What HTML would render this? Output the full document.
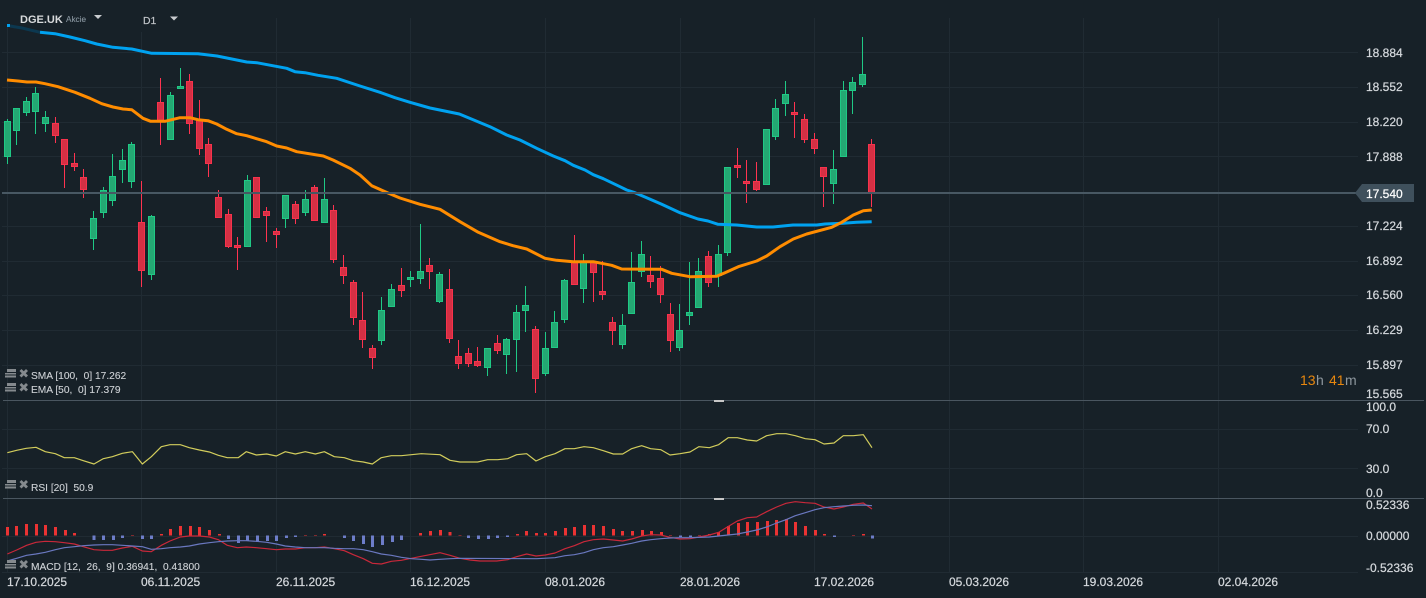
<!DOCTYPE html>
<html><head><meta charset="utf-8"><title>DGE.UK</title>
<style>
html,body{margin:0;padding:0;background:#172128;width:1426px;height:598px;overflow:hidden}
svg{display:block;font-family:"Liberation Sans",sans-serif}
.p{font-size:12px;fill:#d4d8dc;stroke:#d4d8dc;stroke-width:.22}
.l{font-size:10.2px;fill:#cdd1d5;stroke:#cdd1d5;stroke-width:.12;white-space:pre}
</style></head><body>
<svg width="1426" height="598" viewBox="0 0 1426 598" xmlns="http://www.w3.org/2000/svg" xml:space="preserve">
<rect width="1426" height="598" fill="#172128"/>

<!-- grid -->
<path fill="none" stroke="#202b33" stroke-width="1" d="M2 52.5H1358M2 87.5H1358M2 122.5H1358M2 156.5H1358M2 226.5H1358M2 261.5H1358M2 295.5H1358M2 330.5H1358M2 365.5H1358M2 429.5H1358M2 468.5H1358M2 536.5H1358M2 572.5H1358"/>
<path fill="none" stroke="#202b33" stroke-width="1" d="M7.5 25V572M141.5 32V572M276.5 18V572M410.5 18V572M545.5 18V572M680.5 18V572M814.5 18V572M949.5 18V572M1083.5 18V572M1218.5 18V572"/>

<!-- wicks -->
<path fill="none" stroke="#1fc985" stroke-width="1" d="M7.5 119V164M16.5 108V145M26.5 97V116M35.5 87V134M45.5 111V132M93.5 211V250M103.5 187V218M112.5 154V206M122.5 149V183M131.5 142V188M151.5 215V280M170.5 92V140M180.5 68V89M247.5 175V247M285.5 195V228M305.5 190V216M324.5 178V223M381.5 297V345M391.5 284V307M410.5 271V287M420.5 224V284M439.5 272V303M487.5 348V376M506.5 338V374M516.5 305V372M525.5 286V332M545.5 332V376M554.5 311V348M564.5 279V323M583.5 254V303M622.5 314V349M631.5 252V314M641.5 241V277M679.5 304V351M689.5 262V325M698.5 258V308M718.5 245V287M727.5 167V256M766.5 129V185M775.5 99V140M785.5 81V116M833.5 150V204M843.5 81V157M852.5 77V114M862.5 37V87"/>
<path fill="none" stroke="#ff3350" stroke-width="1" d="M55.5 117V143M64.5 139V188M74.5 153V171M83.5 169V198M141.5 181V287M160.5 78V145M189.5 74V134M199.5 100V155M208.5 138V177M218.5 190V218M228.5 209V248M237.5 237V270M256.5 177V218M266.5 207V242M276.5 228V248M295.5 201V224M314.5 185V221M333.5 205V263M343.5 255V284M353.5 280V325M362.5 292V348M372.5 345V369M401.5 268V297M429.5 258V289M449.5 269V343M458.5 340V369M468.5 348V367M477.5 347V367M497.5 335V354M535.5 326V393M574.5 235V285M593.5 261V302M602.5 261V300M612.5 317V345M650.5 256V288M660.5 266V303M670.5 303V352M708.5 251V287M737.5 148V178M746.5 160V203M756.5 162V191M794.5 102V138M804.5 114V143M814.5 133V154M823.5 167V207M871.5 139V207"/>

<!-- bodies -->
<path fill="#24a873" stroke="#1fc985" stroke-width="1" d="M4.5 121.5h6v35h-6zM13.5 108.5h6v22h-6zM23.5 101.5h6v11h-6zM32.5 93.5h6v18h-6zM42.5 117.5h6v6h-6zM90.5 218.5h6v20h-6zM100.5 190.5h6v22h-6zM109.5 176.5h6v24h-6zM119.5 160.5h6v9h-6zM128.5 144.5h6v37h-6zM148.5 216.5h6v58h-6zM167.5 95.5h6v44h-6zM177.5 86.5h6v2h-6zM244.5 180.5h6v66h-6zM282.5 195.5h6v23h-6zM302.5 199.5h6v13h-6zM321.5 199.5h6v23h-6zM378.5 310.5h6v30h-6zM388.5 289.5h6v17h-6zM407.5 277.5h6v2h-6zM417.5 271.5h6v7h-6zM436.5 274.5h6v27h-6zM484.5 348.5h6v19h-6zM503.5 339.5h6v15h-6zM513.5 312.5h6v27h-6zM522.5 305.5h6v5h-6zM542.5 348.5h6v25h-6zM551.5 322.5h6v25h-6zM561.5 280.5h6v39h-6zM580.5 261.5h6v27h-6zM619.5 325.5h6v19h-6zM628.5 282.5h6v31h-6zM638.5 254.5h6v17h-6zM676.5 330.5h6v17h-6zM686.5 312.5h6v3h-6zM695.5 271.5h6v36h-6zM715.5 254.5h6v21h-6zM724.5 167.5h6v85h-6zM763.5 129.5h6v55h-6zM772.5 108.5h6v28h-6zM782.5 94.5h6v9h-6zM830.5 169.5h6v14h-6zM840.5 90.5h6v66h-6zM849.5 82.5h6v8h-6zM859.5 74.5h6v10h-6z"/>
<path fill="#d53044" stroke="#f8324c" stroke-width="1" d="M52.5 123.5h6v12h-6zM61.5 139.5h6v25h-6zM71.5 163.5h6v3h-6zM80.5 177.5h6v12h-6zM138.5 222.5h6v48h-6zM157.5 102.5h6v19h-6zM186.5 81.5h6v42h-6zM196.5 120.5h6v28h-6zM205.5 144.5h6v19h-6zM215.5 197.5h6v20h-6zM225.5 214.5h6v32h-6zM234.5 245.5h6v2h-6zM253.5 177.5h6v40h-6zM263.5 211.5h6v4h-6zM273.5 231.5h6v3h-6zM292.5 204.5h6v14h-6zM311.5 187.5h6v33h-6zM330.5 210.5h6v49h-6zM340.5 267.5h6v8h-6zM350.5 282.5h6v35h-6zM359.5 320.5h6v19h-6zM369.5 348.5h6v9h-6zM398.5 285.5h6v5h-6zM426.5 265.5h6v6h-6zM446.5 289.5h6v49h-6zM455.5 356.5h6v7h-6zM465.5 353.5h6v10h-6zM474.5 361.5h6v4h-6zM494.5 343.5h6v7h-6zM532.5 329.5h6v49h-6zM571.5 261.5h6v23h-6zM590.5 261.5h6v11h-6zM599.5 291.5h6v3h-6zM609.5 322.5h6v8h-6zM647.5 275.5h6v6h-6zM657.5 278.5h6v16h-6zM667.5 314.5h6v26h-6zM705.5 256.5h6v26h-6zM734.5 165.5h6v2h-6zM743.5 181.5h6v2h-6zM753.5 181.5h6v8h-6zM791.5 112.5h6v2h-6zM801.5 119.5h6v20h-6zM811.5 139.5h6v9h-6zM820.5 167.5h6v9h-6zM868.5 144.5h6v48h-6z"/>

<!-- blue MA -->
<rect x="7" y="24" width="3" height="3" fill="#00a2f0"/>
<polyline fill="none" stroke="#0c3850" stroke-width="3" points="10,26 22,28 40,32.3"/>
<polyline fill="none" stroke="#00a2f0" stroke-width="3" stroke-linejoin="round" points="40,32.3 55,33.7 70,37 85,40.7 96.7,44 113,47.3 131.7,49 151.7,53.3 198,53.7 217,56 246.7,62 256.7,62.7 286.7,68.3 295,71.7 305,72.7 318,75.3 336.7,78.3 360,86 380,92.3 395,97.7 410,102.3 430,108 459.3,114 490,126.7 506.7,135 520,140 536.7,148.3 553.3,156 565,160.7 573.3,165.3 585,170 593.3,174.7 603.3,178.7 620,186.7 626.7,190 635,192.7 646.7,197.7 661.7,204.3 680,212.7 698,219 708,221 718,224.3 736.7,225 756.7,227 773,227 793,225 816.7,225 825,224 843,223.3 856.7,222.3 871.7,221.7"/>
<!-- orange MA -->
<polyline fill="none" stroke="#ff8c00" stroke-width="3" stroke-linejoin="round" points="7,80 18,81 27,82 36,82 45,83.7 58,86.7 75,92.3 90,98.3 101.7,103.7 113,107 123,109 131.7,109.7 143,118.3 150.7,121.3 165,121.3 180,117.7 190,117.7 198,119.7 208,120.7 216.7,124 226.7,129.3 236.7,133.7 246.7,135.7 266.7,141.7 276.7,146 286.7,148 296.7,151.7 323.3,156 333,160 350,168.3 360,175 371.7,185.7 388,193 400,198 420,204.3 440,209.3 460,221.7 478.3,232.3 500,241.7 513,245.7 526.7,249 545,258.3 556.7,260.3 573.3,261.7 593.3,261.7 611.7,265.3 621.7,269 661.7,269.3 671.7,273.3 690,276.7 716.7,276.3 725,272.7 738.3,266.7 756.7,261 766.7,256 780,246.7 793.3,239 806.7,234 831.7,227.3 841.7,222.3 853.3,215 863.3,210.7 871.7,210"/>

<!-- current price line -->
<rect x="2" y="192" width="1354" height="2" fill="#485863"/>
<polygon points="1355,193 1362,184 1414,184 1414,202 1362,202" fill="#3f505c"/>

<!-- separators -->
<rect x="3" y="400" width="1421" height="1" fill="#4a5660"/>
<rect x="3" y="498" width="1421" height="1" fill="#4a5660"/>
<rect x="714" y="400" width="10" height="2" fill="#c8c8c8"/>
<rect x="714" y="498" width="10" height="2" fill="#c8c8c8"/>

<!-- RSI -->
<g transform="translate(0,395) scale(.33333)" fill="none" stroke="#d2cd5c" stroke-width="3.6" stroke-linejoin="round">
<polyline points="22,173 50,166 79,160 108,157 136,170 166,176 193,188 223,188 250,197 282,207 310,191 337,185 367,175 397,170 427,207 454,185 484,155 510,149 541,149 568,158 598,165 628,171 655,181 682,188 715,188 739,170 769,180 800,177 829,183 856,170 886,177 916,170 946,177 973,170 1003,185 1033,188 1060,197 1090,201 1117,207 1144,188 1174,182 1204,182 1264,176 1320,179 1350,196 1380,201 1433,201 1463,194 1493,194 1523,191 1550,179 1580,176 1608,198 1636,185 1665,176 1695,161 1723,161 1752,155 1780,158 1810,167 1840,177 1868,177 1895,161 1925,152 1952,161 1982,164 2010,180 2040,176 2070,171 2097,155 2128,158 2156,149 2185,128 2212,128 2242,135 2270,138 2300,122 2330,116 2358,116 2386,122 2416,131 2445,134 2472,147 2502,144 2530,122 2560,122 2590,119 2616,158"/>
</g>

<!-- MACD histogram -->
<g transform="translate(0,395) scale(.33333)" fill="none" stroke-width="9" shape-rendering="crispEdges">
<path stroke="#ea3333" d="M22.5 422V396M49.5 422V393M79.5 422V387M109.5 422V387M136.5 422V390M166.5 422V396M196.5 422V405M223.5 422V414M397.5 422V420M484.5 422V417M511.5 422V402M541.5 422V393M571.5 422V393M598.5 422V396M628.5 422V405M658.5 422V417M916.5 422V420M946.5 422V420M973.5 422V417M1261.5 422V414M1291.5 422V408M1321.5 422V405M1350 422V411M1380 422V420M1553 422V417M1580 422V408M1610 422V414M1636 422V414M1666 422V408M1696 422V399M1723 422V396M1753 422V390M1780 422V390M1810 422V393M1840 422V402M1867 422V408M1897 422V408M1927 422V405M1954 422V408M1984 422V411M2011 422V420M2098 422V420M2128 422V417M2155 422V411M2185 422V393M2215 422V384M2242 422V381M2272 422V381M2302 422V378M2329 422V375M2359 422V372M2386 422V381M2416 422V393M2446 422V405M2473 422V417M2560 422V420M2590 422V417"/>
<path stroke="#6d7dc9" d="M282 422V435M310.5 422V435M340.5 422V435M367.5 422V429M427.5 422V432M454.5 422V432M685.5 422V432M715.5 422V444M742.5 422V438M772.5 422V441M802.5 422V438M829.5 422V438M859.5 422V429M886.5 422V426M1033.5 422V429M1060.5 422V438M1090.5 422V447M1117.5 422V456M1147.5 422V450M1177.5 422V441M1204.5 422V435M1406 422V429M1436 422V432M1466 422V432M1493 422V429M1523 422V426M2041 422V426M2071 422V426M2503 422V426M2617 422V431"/>
</g>
<!-- MACD lines -->
<g transform="translate(0,395) scale(.33333)" fill="none" stroke-width="3.6" stroke-linejoin="round">
<polyline stroke="#c9283a" points="22,477 50,465 80,451 108,442 136,439 166,440 193,443 223,447 250,455 282,464 310,466 337,466 367,459 397,454 427,468 454,470 484,451 510,438 541,426 568,423 598,423 628,426 655,434 682,451 712,458 739,456 769,458 800,461 829,464 856,462 886,462 916,458 946,458 973,456 1003,461 1033,467 1060,479 1090,491 1117,505 1144,507 1174,499 1204,496 1234,490 1264,484 1320,473 1350,481 1380,490 1410,495 1440,498 1490,498 1523,494 1550,485 1580,477 1608,483 1636,480 1665,474 1695,461 1723,452 1752,440 1780,434 1810,432 1840,435 1868,438 1895,432 1925,423 1952,419 1982,420 2010,427 2040,432 2070,431 2097,426 2128,420 2156,412 2185,394 2212,378 2242,368 2270,366 2300,350 2330,336 2358,325 2386,320 2416,323 2445,325 2472,336 2502,342 2530,336 2560,328 2590,324 2616,342"/>
<polyline stroke="#6a78c0" points="22,498 50,490 80,481 108,477 136,472 166,464 193,458 223,455 250,452 282,450 310,449 337,449 367,451 397,453 427,455 454,463 484,461 510,458 541,456 568,453 598,447 628,443 655,440 682,438 712,437 739,437 769,439 800,442 829,447 856,453 886,456 916,458 946,458 973,458 1003,460 1033,461 1060,461 1090,464 1117,470 1144,477 1174,481 1204,487 1234,491 1264,493 1290,495 1320,493 1350,491 1380,490 1610,491 1665,488 1695,482 1723,479 1752,473 1780,464 1810,458 1840,455 1868,450 1895,445 1925,438 1952,434 1982,431 2010,429 2040,428 2070,428 2128,426 2156,423 2212,417 2242,411 2270,405 2300,396 2330,384 2358,374 2386,362 2416,353 2445,344 2472,338 2502,335 2530,333 2560,331 2590,330 2616,332"/>
</g>

<!-- legend icons -->
<g fill="#858a8e">
<path d="M7 369h9v3H7zM5 373h11v1.5H5zM5 375.5h11v2H5zM7 383h9v3H7zM5 387h11v1.5H5zM5 389.5h11v2H5zM7 480h9v3H7zM5 484h11v1.5H5zM5 486.5h11v2H5zM7 560h9v3H7zM5 564h11v1.5H5zM5 566.5h11v2H5z"/>
</g>
<g fill="none" stroke="#858a8e" stroke-width="2.8">
<path d="M20.5 370l6.5 6.5M27 370l-6.5 6.5M20.5 384l6.5 6.5M27 384l-6.5 6.5M20.5 481l6.5 6.5M27 481l-6.5 6.5M20.5 561l6.5 6.5M27 561l-6.5 6.5"/>
</g>

<!-- legend text -->
<text class="l" x="31" y="379">SMA [100,  0] 17.262</text>
<text class="l" x="31" y="393">EMA [50,  0] 17.379</text>
<text class="l" x="31" y="491">RSI [20]  50.9</text>
<text class="l" x="31" y="570">MACD [12,  26,  9] 0.36941,  0.41800</text>

<!-- header -->
<text x="20" y="23" font-size="11" font-weight="700" fill="#d8dadc">DGE.UK</text>
<text x="66" y="22" font-size="8.2" fill="#8a97a1" stroke="#8a97a1" stroke-width=".1">Akcie</text>
<polygon points="94,15 102,15 98,19" fill="#c9cccf"/>
<text x="143" y="24" font-size="10.4" fill="#c4c8cc" stroke="#c4c8cc" stroke-width=".15">D1</text>
<polygon points="170,16.5 178,16.5 174,20.5" fill="#c9cccf"/>

<!-- price axis -->
<text class="p" x="1366" y="57">18.884</text>
<text class="p" x="1366" y="91">18.552</text>
<text class="p" x="1366" y="126">18.220</text>
<text class="p" x="1366" y="161">17.888</text>
<text class="p" x="1366" y="198" style="fill:#fff;stroke:#fff">17.540</text>
<text class="p" x="1366" y="230">17.224</text>
<text class="p" x="1366" y="265">16.892</text>
<text class="p" x="1366" y="299">16.560</text>
<text class="p" x="1366" y="334">16.229</text>
<text class="p" x="1366" y="369">15.897</text>
<text class="p" x="1366" y="398">15.565</text>
<text class="p" x="1366" y="411">100.0</text>
<text class="p" x="1366" y="433">70.0</text>
<text class="p" x="1366" y="473">30.0</text>
<text class="p" x="1366" y="497">0.0</text>
<text class="p" x="1366" y="509">0.52336</text>
<text class="p" x="1366" y="540">0.00000</text>
<text class="p" x="1366" y="572">-0.52336</text>

<!-- countdown -->
<text y="385" font-size="14"><tspan x="1300" fill="#e8870e">13</tspan><tspan x="1316" fill="#8e979e">h</tspan><tspan x="1329" fill="#e8870e">41</tspan><tspan x="1345" fill="#8e979e">m</tspan></text>

<!-- date axis -->
<text class="p" x="7" y="586">17.10.2025</text>
<text class="p" x="141" y="586">06.11.2025</text>
<text class="p" x="276" y="586">26.11.2025</text>
<text class="p" x="410" y="586">16.12.2025</text>
<text class="p" x="545" y="586">08.01.2026</text>
<text class="p" x="680" y="586">28.01.2026</text>
<text class="p" x="814" y="586">17.02.2026</text>
<text class="p" x="949" y="586">05.03.2026</text>
<text class="p" x="1083" y="586">19.03.2026</text>
<text class="p" x="1218" y="586">02.04.2026</text>
</svg>
</body></html>
